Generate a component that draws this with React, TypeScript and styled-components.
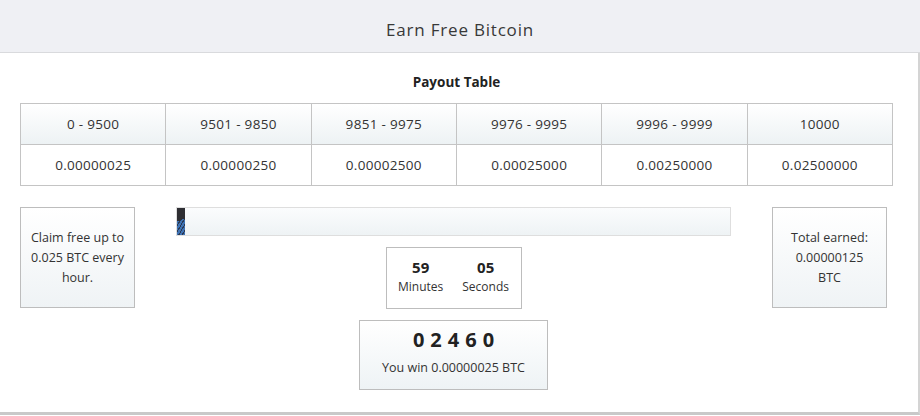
import React from "react";
import styled, { createGlobalStyle } from "styled-components";

const Global = createGlobalStyle`
  html, body { margin: 0; padding: 0; background: #ffffff; }
  body { font-family: "Open Sans", "Liberation Sans", sans-serif; color: #333; }
  * { box-sizing: border-box; }
`;

const Page = styled.div`
  width: 920px;
  height: 416px;
  display: flex;
  flex-direction: column;
  background: #fff;
`;

const Header = styled.header`
  height: 53px;
  flex: none;
  background: #eff0f4;
  border-bottom: 1px solid #d9dadd;
  display: flex;
  align-items: center;
  justify-content: center;
  padding-top: 6px;
  font-size: 17px;
  color: #383838;
  letter-spacing: 0.8px;
`;

const Panel = styled.main`
  width: 920px;
  height: 362px;
  flex: none;
  background: #fff;
  border-right: 2px solid #d4d4d4;
  border-bottom: 3px solid #c9c9c9;
  padding: 19px 0 0 20px;
  display: flex;
  flex-direction: column;
`;

const Title = styled.h2`
  margin: 0;
  width: 873px;
  text-align: center;
  font-size: 13.5px;
  font-weight: 700;
  color: #222;
  line-height: 20px;
`;

const Table = styled.div`
  margin-top: 11px;
  width: 873px;
  display: grid;
  grid-template-columns: repeat(6, 1fr);
  border-top: 1px solid #c4c4c4;
  border-left: 1px solid #c4c4c4;
`;

const Cell = styled.div<{ $head?: boolean }>`
  height: 41px;
  display: flex;
  align-items: center;
  justify-content: center;
  border-right: 1px solid #c4c4c4;
  border-bottom: 1px solid #c4c4c4;
  font-size: 13.5px;
  letter-spacing: 0.3px;
  color: #333;
  background: ${(p) => (p.$head ? "linear-gradient(#ffffff, #edf2f4)" : "#ffffff")};
`;

const Lower = styled.div`
  margin-top: 21px;
  display: grid;
  grid-template-columns: 115px 555px 115px;
  column-gap: 41px;
  align-items: start;
`;

const InfoBox = styled.div`
  height: 101px;
  border: 1px solid #bdbdbd;
  background: linear-gradient(#ffffff, #eff3f5);
  display: flex;
  align-items: center;
  justify-content: center;
  text-align: center;
  font-size: 12.5px;
  line-height: 20px;
  color: #333;
  padding: 0 6px;
`;

const Middle = styled.div`
  display: flex;
  flex-direction: column;
  align-items: center;
`;

const Bar = styled.div`
  width: 555px;
  height: 29px;
  border: 1px solid #dedede;
  background: linear-gradient(#fbfcfd, #eef3f5);
  display: flex;
`;

const BarFill = styled.div`
  height: 100%;
  background:
    linear-gradient(160deg, #2e2e33 0 45%, transparent 45%),
    repeating-linear-gradient(-60deg, #3f73b4 0 2px, #2a3a55 2px 3px);
`;

const Timer = styled.div`
  margin-top: 11px;
  width: 136px;
  height: 62px;
  border: 1px solid #bdbdbd;
  display: flex;
  justify-content: center;
  gap: 19px;
  padding-top: 8px;
`;

const TimeUnit = styled.div`
  display: flex;
  flex-direction: column;
  align-items: center;
`;

const TimeValue = styled.div`
  font-family: "Noto Sans", "Open Sans", sans-serif;
  font-weight: 700;
  font-size: 15px;
  line-height: 22px;
  color: #222;
`;

const TimeLabel = styled.div`
  font-size: 12px;
  line-height: 18px;
  color: #333;
`;

const WinBox = styled.div`
  margin-top: 11px;
  width: 189px;
  height: 70px;
  border: 1px solid #bdbdbd;
  background: linear-gradient(#ffffff, #eef3f5);
  display: flex;
  flex-direction: column;
  align-items: center;
  padding-top: 5px;
`;

const Roll = styled.div`
  font-family: "Noto Sans", "Open Sans", sans-serif;
  font-weight: 700;
  font-size: 20px;
  letter-spacing: 6px;
  line-height: 28px;
  color: #222;
  padding-left: 6px;
`;

const WinText = styled.div`
  margin-top: 5px;
  font-size: 12.5px;
  line-height: 18px;
  color: #333;
`;

const ranges = ["0 - 9500", "9501 - 9850", "9851 - 9975", "9976 - 9995", "9996 - 9999", "10000"];
const payouts = ["0.00000025", "0.00000250", "0.00002500", "0.00025000", "0.00250000", "0.02500000"];

export default function App() {
  const progress = 1.4;
  return (
    <Page>
      <Global />
      <Header>Earn Free Bitcoin</Header>
      <Panel>
        <Title>Payout Table</Title>
        <Table>
          {ranges.map((r) => (
            <Cell $head key={r}>{r}</Cell>
          ))}
          {payouts.map((p) => (
            <Cell key={p}>{p}</Cell>
          ))}
        </Table>
        <Lower>
          <InfoBox>Claim free up to 0.025 BTC every hour.</InfoBox>
          <Middle>
            <Bar>
              <BarFill style={{ width: `${progress}%` }} />
            </Bar>
            <Timer>
              <TimeUnit>
                <TimeValue>59</TimeValue>
                <TimeLabel>Minutes</TimeLabel>
              </TimeUnit>
              <TimeUnit>
                <TimeValue>05</TimeValue>
                <TimeLabel>Seconds</TimeLabel>
              </TimeUnit>
            </Timer>
            <WinBox>
              <Roll>02460</Roll>
              <WinText>You win 0.00000025 BTC</WinText>
            </WinBox>
          </Middle>
          <InfoBox>
            Total earned:
            <br />
            0.00000125
            <br />
            BTC
          </InfoBox>
        </Lower>
      </Panel>
    </Page>
  );
}
